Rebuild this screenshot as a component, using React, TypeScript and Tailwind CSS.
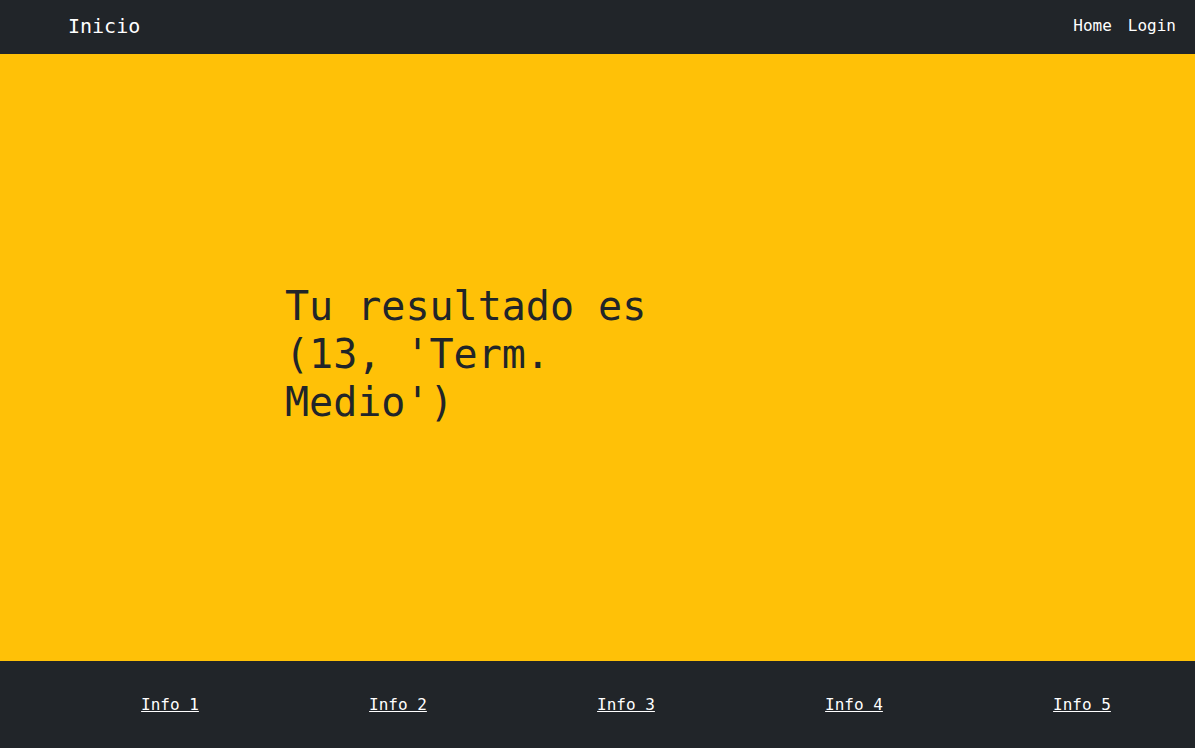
export default function App() {
  const links = ['Info 1', 'Info 2', 'Info 3', 'Info 4', 'Info 5']
  return (
    <div className="flex h-[748px] flex-col overflow-hidden bg-[#ffc107] font-['DejaVu_Sans_Mono',monospace] text-[#212529]">
      {/* Navbar */}
      <nav className="flex h-[54px] shrink-0 items-center justify-between bg-[#212529] pb-[2px] pl-[68px] pr-[11px]">
        <a href="#" className="text-[20px] leading-[30px] text-white">
          Inicio
        </a>
        <div className="flex">
          <a href="#" className="px-2 text-[16px] leading-6 text-white">
            Home
          </a>
          <a href="#" className="px-2 text-[16px] leading-6 text-white">
            Login
          </a>
        </div>
      </nav>

      {/* Result */}
      <main className="flex flex-1 items-center pl-[285px]">
        <h1 className="mb-2 w-[420px] text-[40px] font-normal leading-[48px]">
          Tu resultado es (13, 'Term. Medio')
        </h1>
      </main>

      {/* Footer */}
      <footer className="flex h-[87px] shrink-0 items-center bg-[#212529] pl-[56px]">
        {links.map((l) => (
          <div key={l} className="flex w-[228px] shrink-0 justify-center">
            <a href="#" className="text-[16px] leading-6 text-white underline">
              {l}
            </a>
          </div>
        ))}
      </footer>
    </div>
  )
}
